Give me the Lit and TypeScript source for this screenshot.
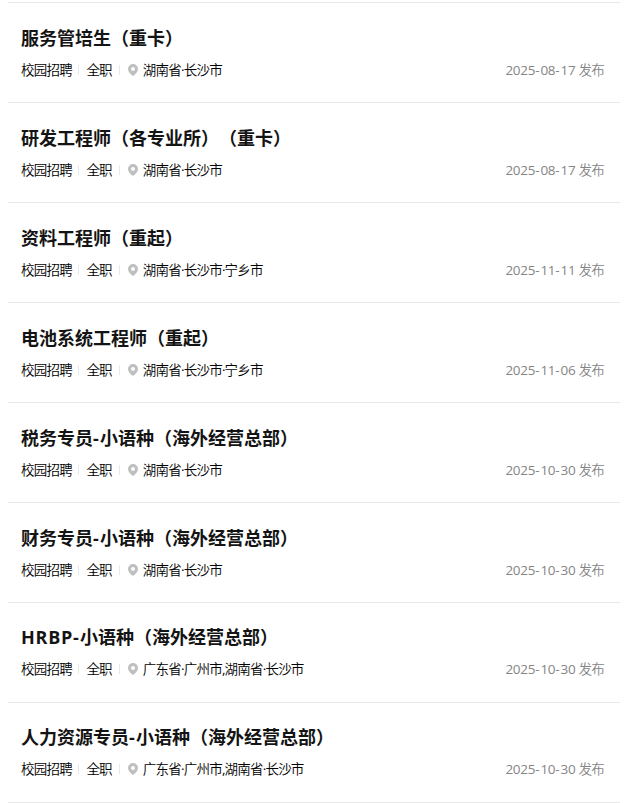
import { LitElement, html, css } from "lit";
import { customElement } from "lit/decorators.js";

interface Job { title: string; place: string; date: string; raised?: boolean }

const jobs: Job[] = [
  { title: "服务管培生（重卡）", place: "湖南省·长沙市", date: "2025-08-17" },
  { title: "研发工程师（各专业所）（重卡）", place: "湖南省·长沙市", date: "2025-08-17" },
  { title: "资料工程师（重起）", place: "湖南省·长沙市·宁乡市", date: "2025-11-11" },
  { title: "电池系统工程师（重起）", place: "湖南省·长沙市·宁乡市", date: "2025-11-06" },
  { title: "税务专员-小语种（海外经营总部）", place: "湖南省·长沙市", date: "2025-10-30" },
  { title: "财务专员-小语种（海外经营总部）", place: "湖南省·长沙市", date: "2025-10-30" },
  { title: "HRBP-小语种（海外经营总部）", place: "广东省·广州市,湖南省·长沙市", date: "2025-10-30", raised: true },
  { title: "人力资源专员-小语种（海外经营总部）", place: "广东省·广州市,湖南省·长沙市", date: "2025-10-30", raised: true },
];

/** Wraps Latin letters and punctuation so they can be tracked apart from the Chinese text. */
const mixed = (text: string) =>
  text.split(/([A-Z]+|[-·,])/).filter(Boolean).map((part) =>
    /^[A-Z]/.test(part) ? html`<span class="latin">${part}</span>`
      : part === "-" ? html`<span class="dash">-</span>`
      : /^[·,]$/.test(part) ? html`<span class="mark">${part}</span>` : part);

@customElement("app-root")
export class AppRoot extends LitElement {
  static styles = css`
    :host { display: block; height: 803px; overflow: hidden; background: #fff; font-family: "Open Sans", "Noto Sans CJK SC", sans-serif; color: #141414; text-spacing-trim: space-all; }
    .list { width: 612px; margin-left: 8px; padding-top: 2px; }
    .job { box-sizing: border-box; height: 100px; border-top: 1px solid #e8e8e8; padding: 21px 16px 0 13px; }
    .raised { padding-top: 20px; }
    .last { height: 1px; background: #e8e8e8; }
    .title { font-size: 18px; line-height: 28px; height: 28px; font-weight: 700; white-space: nowrap; }
    .latin { letter-spacing: 0.75px; }
    .title .dash { letter-spacing: 1.2px; }
    .row { display: flex; align-items: center; height: 22px; margin-top: 7px; font-size: 13.5px; line-height: 22px; font-weight: 350; color: #000; letter-spacing: -0.78px; white-space: nowrap; }
    .sep { width: 1px; height: 10px; background: #e8e8e8; margin: 0 7.5px 0 6px; flex: none; }
    .sep.second { margin: 0 8.300px 0 7px; }
    .pin { width: 10px; height: 12px; margin: 0 4.700px 0 0; flex: none; }
    .mark { font-weight: 400; letter-spacing: -0.85px; }
    .date { margin-left: auto; color: #858585; }
    .day { font-size: 13.5px; font-weight: 400; letter-spacing: -0.3px; }
    .day .dash { letter-spacing: 0.9px; }
  `;
  render() {
    return html`<div class="list">
      ${jobs.map((j) => html`<div class="job ${j.raised ? "raised" : ""}">
        <div class="title">${mixed(j.title)}</div>
        <div class="row"><span>校园招聘</span><i class="sep"></i><span>全职</span><i class="sep second"></i>
          <svg class="pin" viewBox="0 0 10 12"><path fill="#bfbfbf" fill-rule="evenodd" d="M5 0a5 5 0 0 1 5 5c0 2.600-2.300 5-5 7-2.700-2-5-4.400-5-7a5 5 0 0 1 5-5zm0 3a2 2 0 1 0 0 4 2 2 0 0 0 0-4z"/></svg>
          <span class="place">${mixed(j.place)}</span><span class="date"><span class="day">${mixed(j.date)} </span>发布</span></div>
      </div>`)}
      <div class="last"></div>
    </div>`;
  }
}
